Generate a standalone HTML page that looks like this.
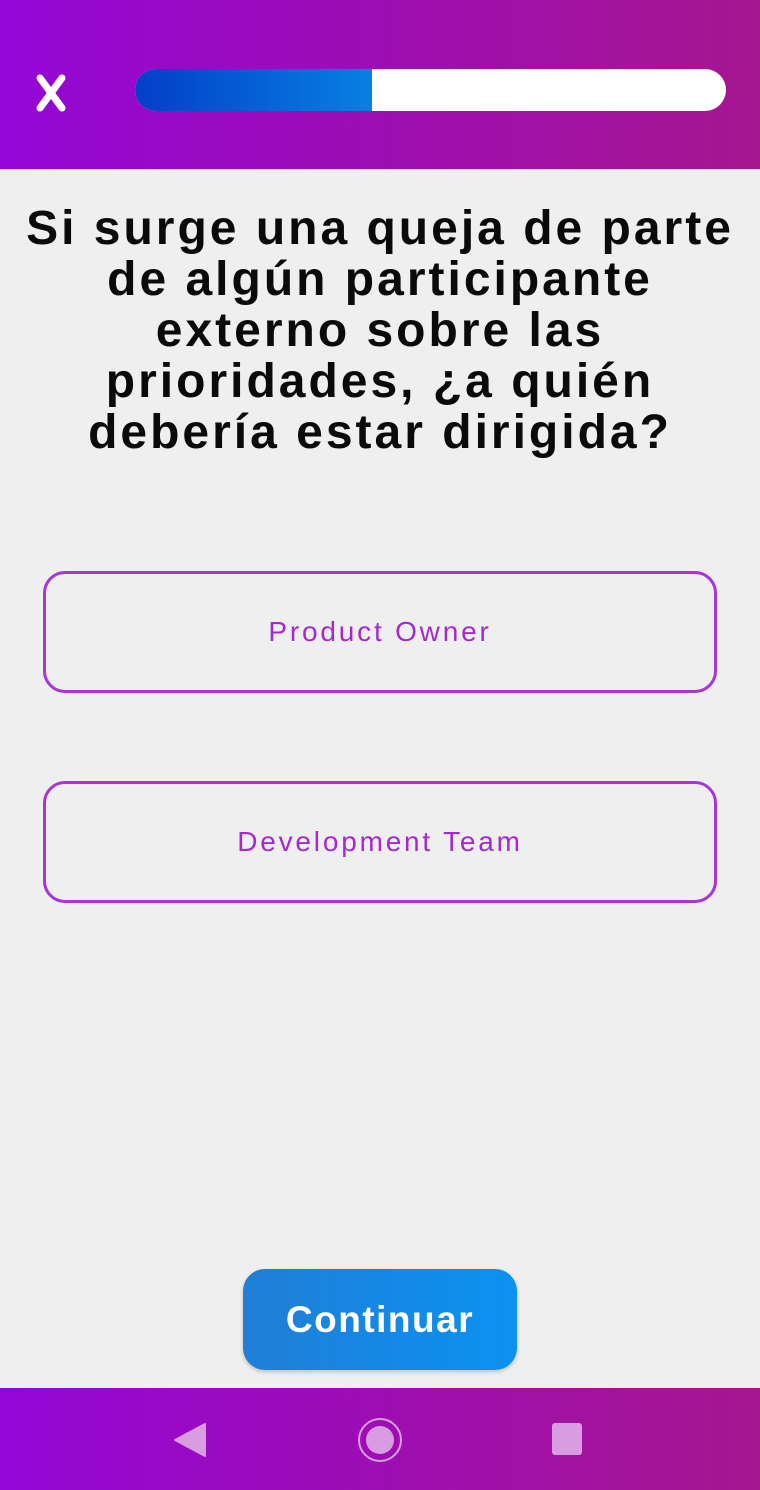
<!DOCTYPE html>
<html><head><meta charset="utf-8"><style>
*{margin:0;padding:0;box-sizing:border-box}
body{width:760px;height:1490px;background:#efefef;font-family:"Liberation Sans",sans-serif;position:relative;overflow:hidden}
.top{position:absolute;left:0;top:0;width:760px;height:169px;background:linear-gradient(90deg,#9406d6,#a6168f)}
.bar{position:absolute;left:135px;top:69px;width:591px;height:42px;border-radius:21px;background:#fff;overflow:hidden}
.fill{width:237px;height:100%;background:linear-gradient(90deg,#033ec8,#0780e2)}
.q{position:absolute;left:0;top:203px;width:760px;text-align:center;font-weight:bold;font-size:48px;letter-spacing:3px;line-height:51px;color:#0a0a0a}
.opt{position:absolute;left:43px;width:674px;height:122px;border:3px solid #a836d4;border-radius:22px;display:flex;align-items:center;justify-content:center;color:#a42ad0;font-size:28px;letter-spacing:2.8px}
.btn{position:absolute;left:243px;top:1269px;width:274px;height:101px;border-radius:22px;background:linear-gradient(90deg,#207ed6,#0b92f2);color:#fff;font-weight:bold;font-size:37px;letter-spacing:1.5px;display:flex;align-items:center;justify-content:center;box-shadow:0 2px 4px rgba(0,0,0,.2)}
.nav{position:absolute;left:0;top:1388px;width:760px;height:102px;background:linear-gradient(90deg,#9406d6,#a6168f)}
</style></head><body>
<div class="top">
<svg style="position:absolute;left:34px;top:74px" width="34" height="38" viewBox="0 0 34 38"><path d="M6 4 L28 34 M28 4 L6 34" stroke="#fff" stroke-width="7" stroke-linecap="round"/></svg>
<div class="bar"><div class="fill"></div></div>
</div>
<div class="q">Si surge una queja de parte<br>de algún participante<br>externo sobre las<br>prioridades, ¿a quién<br>debería estar dirigida?</div>
<div class="opt" style="top:571px">Product Owner</div>
<div class="opt" style="top:781px">Development Team</div>
<div class="btn">Continuar</div>
<div class="nav">
<svg style="position:absolute;left:168px;top:32px" width="40" height="40" viewBox="0 0 40 40"><path d="M37 4 L37 36 L7 20 Z" fill="#d89ce0" stroke="#d89ce0" stroke-width="2" stroke-linejoin="round"/></svg>
<svg style="position:absolute;left:355px;top:27px" width="50" height="50" viewBox="0 0 50 50"><circle cx="25" cy="25" r="21" fill="none" stroke="#d89ce0" stroke-width="2"/><circle cx="25" cy="25" r="14" fill="#d89ce0"/></svg>
<div style="position:absolute;left:552px;top:35px;width:30px;height:32px;border-radius:3px;background:#d89ce0"></div>
</div>
</body></html>
